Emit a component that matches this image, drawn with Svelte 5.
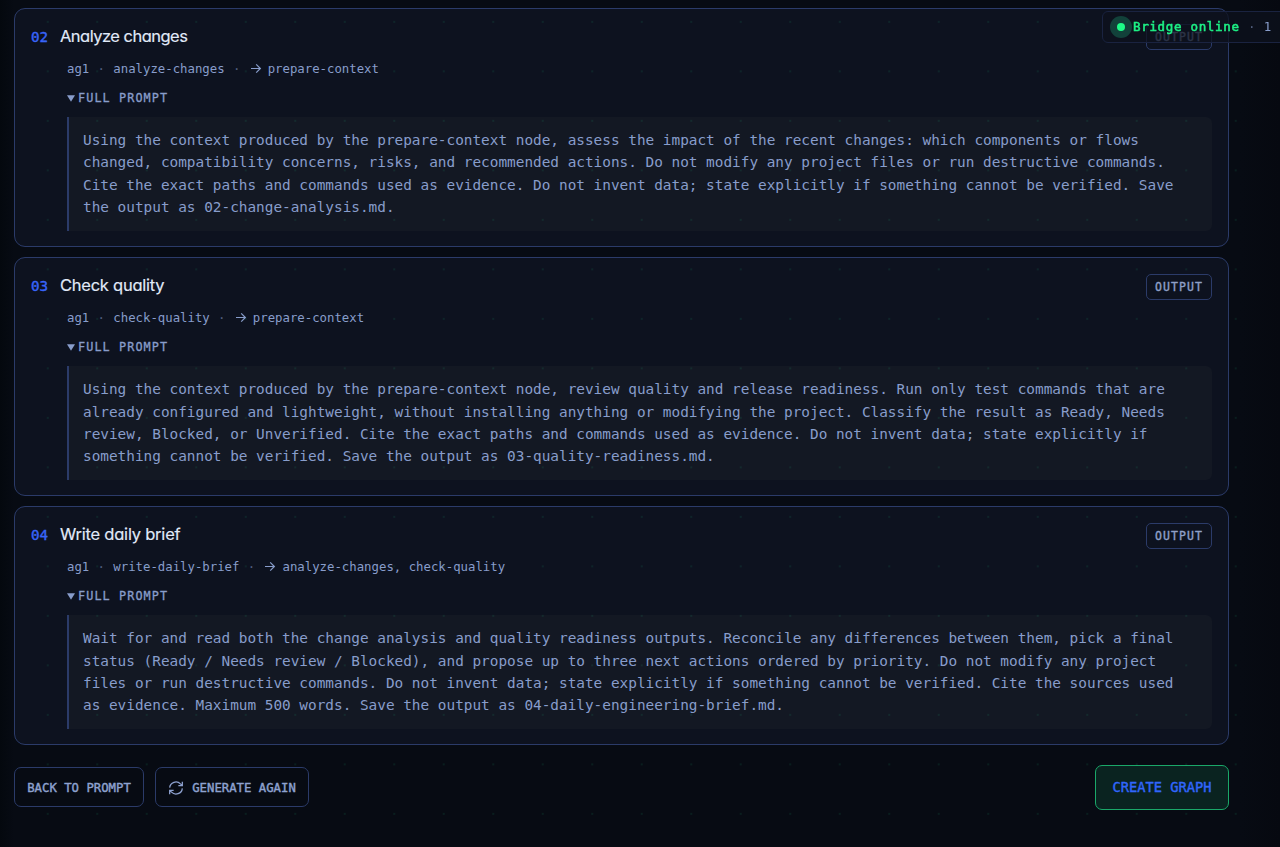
<script>
  const nodes = [
    {
      num: '02', title: 'Analyze changes', slug: 'analyze-changes', deps: 'prepare-context', tracking: -0.52,
      lines: [
        'Using the context produced by the prepare-context node, assess the impact of the recent changes: which components or flows',
        'changed, compatibility concerns, risks, and recommended actions. Do not modify any project files or run destructive commands.',
        'Cite the exact paths and commands used as evidence. Do not invent data; state explicitly if something cannot be verified. Save',
        'the output as 02-change-analysis.md.'
      ]
    },
    {
      num: '03', title: 'Check quality', slug: 'check-quality', deps: 'prepare-context', tracking: -0.25,
      lines: [
        'Using the context produced by the prepare-context node, review quality and release readiness. Run only test commands that are',
        'already configured and lightweight, without installing anything or modifying the project. Classify the result as Ready, Needs',
        'review, Blocked, or Unverified. Cite the exact paths and commands used as evidence. Do not invent data; state explicitly if',
        'something cannot be verified. Save the output as 03-quality-readiness.md.'
      ]
    },
    {
      num: '04', title: 'Write daily brief', slug: 'write-daily-brief', deps: 'analyze-changes, check-quality', tracking: -0.22,
      lines: [
        'Wait for and read both the change analysis and quality readiness outputs. Reconcile any differences between them, pick a final',
        'status (Ready / Needs review / Blocked), and propose up to three next actions ordered by priority. Do not modify any project',
        'files or run destructive commands. Do not invent data; state explicitly if something cannot be verified. Cite the sources used',
        'as evidence. Maximum 500 words. Save the output as 04-daily-engineering-brief.md.'
      ]
    }
  ];
</script>

<main>
  <div class="list">
    {#each nodes as n}
      <article class="card">
        <header>
          <span class="num">{n.num}</span>
          <h3 style:letter-spacing="{n.tracking}px">{n.title}</h3>
          <span class="badge">OUTPUT</span>
        </header>
        <div class="meta">
          <span>ag1</span><span class="sep">·</span><span>{n.slug}</span><span class="sep">·</span>
          <svg class="arrow" viewBox="0 0 12 12"><path d="M1 5.5H10.4M6.2 1.3L10.4 5.5L6.2 9.7" /></svg>
          <span>{n.deps}</span>
        </div>
        <div class="summary">
          <svg viewBox="0 0 8 7"><path d="M0 0.2H8L4 6.8Z" /></svg>
          <span>FULL PROMPT</span>
        </div>
        <div class="prompt">
          {#each n.lines as line}<div>{line}</div>{/each}
        </div>
      </article>
    {/each}
  </div>
  <footer>
    <button class="btn back">BACK TO PROMPT</button>
    <button class="btn again">
      <svg viewBox="0 0 24 24"><path d="M21.5 2.5v6h-6M2.5 21.5v-6h6M2.5 11.5a9.5 9.5 0 0 1 16.2-5.7l2.8 2.7M21.5 12.5a9.5 9.5 0 0 1-16.2 5.7l-2.8-2.7" /></svg>
      <span>GENERATE AGAIN</span>
    </button>
    <button class="btn create">CREATE GRAPH</button>
  </footer>
</main>
<aside class="status">
  <span class="halo"><i></i></span>
  <b>Bridge online</b><span class="sep">·</span><span class="count">1</span>
</aside>

<style>
  :global(body) { background: #060a12; overflow: hidden; }
  main {
    position: relative;
    box-sizing: border-box;
    height: 847px;
    padding: 8px 51px 0 14px;
    background: linear-gradient(90deg, #04080e 0, #070b13 14px, #070b13 1240px, #060910 1280px);
    font-family: "DejaVu Sans Mono", monospace;
    color: #889dcb;
  }
  main::after {
    content: '';
    position: absolute;
    inset: 0;
    pointer-events: none;
    background-image: radial-gradient(circle, rgba(29, 233, 150, 0.085) 0.9px, transparent 1.4px);
    background-size: 49.5px 49.5px;
    background-position: 23px -2.9px;
  }
  .list { display: flex; flex-direction: column; gap: 10px; }
  .card {
    box-sizing: border-box;
    height: 239px;
    padding: 15px 16px 0;
    border: 1px solid #2b3b69;
    border-radius: 11px;
    background: #0d121f;
  }
  header { display: flex; height: 26px; align-items: flex-start; }
  .num { width: 29px; font-size: 14.2px; line-height: 26px; color: #3864f8; -webkit-text-stroke: 0.4px; }
  h3 {
    flex: 1;
    margin: 0;
    font: 400 16.5px/25px Inter, sans-serif;
    font-feature-settings: "cv11";
    color: #e1eaf9;
    -webkit-text-stroke: 0.15px;
  }
  .badge {
    box-sizing: border-box;
    width: 66px;
    height: 26px;
    margin-top: 1px;
    border: 1px solid #2b3b69;
    border-radius: 5px;
    font-size: 11.5px;
    line-height: 24px;
    letter-spacing: 1.1px;
    text-align: center;
    -webkit-text-stroke: 0.35px;
    color: #8fa0c8;
  }
  .card:first-child .badge { margin-top: 0; }
  .meta {
    display: flex;
    align-items: center;
    margin: 8px 0 0 36px;
    height: 22px;
    font-size: 12.33px;
    white-space: nowrap;
  }
  .sep { width: 24px; text-align: center; opacity: 0.55; }
  .arrow { width: 12px; height: 12px; margin: 0 6px 0 1px; fill: none; stroke: currentColor; stroke-width: 1.2; }
  .summary {
    display: flex;
    align-items: center;
    height: 20px;
    margin: 8px 0 0 36px;
    font-size: 11.8px;
    letter-spacing: 1.1px;
    -webkit-text-stroke: 0.3px;
  }
  .summary svg { width: 8px; height: 7px; margin-right: 3px; fill: currentColor; }
  .prompt {
    box-sizing: border-box;
    height: 114px;
    margin: 9px 0 0 36px;
    padding: 12px 0 0 14px;
    border-left: 2px solid #2b3b69;
    border-radius: 0 6px 6px 0;
    background: #131823;
    font-size: 14.38px;
    line-height: 22.35px;
    white-space: nowrap;
  }
  .card:not(:first-child) .prompt div:nth-child(2) { padding-top: 0.35px; margin-bottom: -0.35px; }
  footer { display: flex; align-items: flex-start; height: 45px; margin-top: 20px; }
  .btn {
    display: flex;
    align-items: center;
    justify-content: center;
    box-sizing: border-box;
    height: 40px;
    margin-top: 2px;
    padding: 2px 0 0;
    border: 1px solid #2b3b69;
    border-radius: 7px;
    background: #070b13;
    color: #8ea2d0;
    font: 12.3px "DejaVu Sans Mono", monospace;
    -webkit-text-stroke: 0.4px;
    white-space: nowrap;
  }
  .back { width: 130px; }
  .again { width: 154px; margin-left: 11px; gap: 8px; }
  .again svg { width: 16px; height: 16px; margin-top: -1px; fill: none; stroke: currentColor; stroke-width: 1.9; }
  .create {
    width: 134px;
    height: 45px;
    margin: 0 0 0 auto;
    padding: 0 0 2px;
    border-color: #1aa869;
    background: #0a2320;
    color: #3166fb;
    font-size: 13.7px;
  }
  .status {
    position: fixed;
    z-index: 2;
    left: 1102px;
    top: 11px;
    box-sizing: border-box;
    width: 220px;
    height: 32px;
    padding-left: 7px;
    display: flex;
    align-items: center;
    border: 1px solid #1a2340;
    border-radius: 6px;
    background: rgba(13, 17, 29, 0.76);
    font: 12.5px "DejaVu Sans Mono", monospace;
    color: #889dcb;
  }
  .status > :not(.halo) { padding-bottom: 2px; }
  .halo { display: grid; place-items: center; width: 22px; height: 22px; border-radius: 50%; background: #12413a; }
  .halo i { width: 8px; height: 8px; border-radius: 50%; background: #1dfa87; }
  .status b { margin-left: 1px; font-weight: 400; letter-spacing: 0.68px; color: #1df085; -webkit-text-stroke: 0.55px; }
</style>
